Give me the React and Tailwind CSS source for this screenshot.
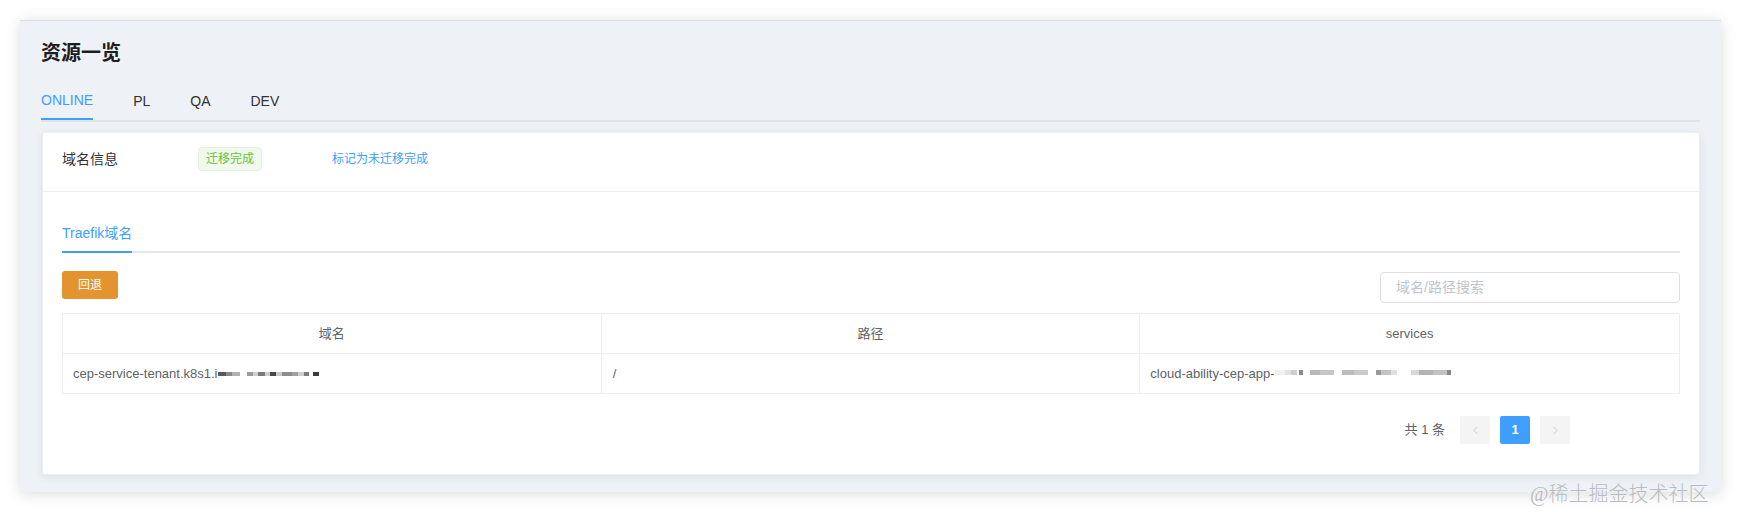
import React from "react";
import { ChevronLeft, ChevronRight } from "lucide-react";

const domainBlocks = [
  [8, "#5a5a5a"], [6, "#8a8a8a"], [8, "#b0b0b0"], [7, null], [6, "#9a9a9a"], [5, "#d0d0d0"], [7, "#7a7a7a"], [5, "#cfcfcf"], [6, "#474747"], [6, "#c8c8c8"], [10, "#8d8d8d"], [6, "#a0a0a0"], [6, "#cfcfcf"], [5, "#7c7c7c"], [4, null], [6, "#3a3a3a"],
];

const serviceBlocks = [
  [10, "#f0f0f0"], [6, "#e2e2e2"], [6, "#cfcfcf"], [2, null], [4, "#8a8a8a"], [7, null], [10, "#b9b9b9"], [14, "#c6c6c6"], [8, null], [12, "#bcbcbc"], [14, "#cacaca"], [8, null], [5, "#9a9a9a"], [10, "#c4c4c4"], [6, "#e0e0e0"], [14, null], [8, "#d8d8d8"], [14, "#b4b4b4"], [14, "#c2c2c2"], [4, "#888888"],
];

function Redacted({ blocks, h = "h-[5px]" }) {
  return (
    <span className="inline-flex items-center">
      {blocks.map(([w, c], i) => (
        <span
          key={i}
          className={`inline-block ${h}`}
          style={{ width: w, backgroundColor: c || "transparent" }}
        />
      ))}
    </span>
  );
}

export default function App() {
  return (
    <div className="relative w-[1741px] h-[512px] bg-white font-['Liberation_Sans','Noto_Sans_CJK_SC',sans-serif] overflow-hidden">
      <div className="pt-[20px] pl-[20px]">
        <div className="w-[1701px] h-[472px] bg-[#eef1f6] border-t border-[#dcdfe4] shadow-[0_2px_14px_rgba(0,0,0,0.14)] pl-[22px] pr-[21px] pt-[18px]">
          <div className="h-[28px] flex items-center text-[20px] font-bold text-[#1d1d1f]">
            <span className="-ml-[1px]">资源一览</span>
          </div>
          {/* env tabs */}
          <div className="mt-[16px] flex gap-[40px] border-b-2 border-[#dfe3ea] -ml-[1px]">
            <div className="h-[37px] flex items-center text-[14px] text-[#409eff] border-b-2 border-[#409eff] -mb-[2px]">ONLINE</div>
            <div className="h-[37px] flex items-center text-[14px] text-[#303133]">PL</div>
            <div className="h-[37px] flex items-center text-[14px] text-[#303133]">QA</div>
            <div className="h-[37px] flex items-center text-[14px] text-[#303133]">DEV</div>
          </div>
          {/* card */}
          <div className="mt-[10px] h-[343px] bg-white rounded-[3px] shadow-[0_2px_8px_rgba(0,0,0,0.08)] border border-[#ebeef5]">
            <div className="h-[59px] border-b border-[#ebeef5] flex items-start pt-[14px] px-[19px]">
              <div className="w-[136px] h-[24px] flex items-center text-[14px] text-[#303133]">域名信息</div>
              <div className="h-[24px] px-[7px] flex items-center rounded-[4px] bg-[#f0f9eb] border border-[#e1f3d8] text-[12px] text-[#67c23a]">迁移完成</div>
              <div className="ml-[70px] h-[24px] flex items-center text-[12px] text-[#409eff]">标记为未迁移完成</div>
            </div>
            <div className="px-[19px] pt-[23px]">
              <div className="flex border-b-2 border-[#e4e7ed]">
                <div className="h-[38px] flex items-center text-[14px] text-[#409eff] border-b-2 border-[#409eff] -mb-[2px]">Traefik域名</div>
              </div>
              <div className="mt-[18px] flex justify-between items-start">
                <button className="w-[56px] h-[28px] rounded-[3px] bg-[#e3942f] text-white text-[12px] flex items-center justify-center">回退</button>
                <div className="mt-[1px] w-[300px] h-[31px] rounded-[4px] border border-[#dcdfe6] flex items-center px-[15px] text-[14px] text-[#c0c4cc]">域名/路径搜索</div>
              </div>
              <div className="mt-[10px] border border-[#ebeef5] text-[13px] text-[#606266]">
                <div className="grid grid-cols-3 h-[40px] border-b border-[#ebeef5]">
                  <div className="flex items-center justify-center border-r border-[#ebeef5]">域名</div>
                  <div className="flex items-center justify-center border-r border-[#ebeef5]">路径</div>
                  <div className="flex items-center justify-center">services</div>
                </div>
                <div className="grid grid-cols-3 h-[39px]">
                  <div className="flex items-center px-[10px] border-r border-[#ebeef5]">
                    <span>cep-service-tenant.k8s1.i</span>
                    <Redacted blocks={domainBlocks} h="h-[4px]" />
                  </div>
                  <div className="flex items-center px-[11px] border-r border-[#ebeef5]">/</div>
                  <div className="flex items-center px-[10px]">
                    <span>cloud-ability-cep-app-</span>
                    <span className="-mt-[6px]">
                      <Redacted blocks={serviceBlocks} h="h-[5px]" />
                    </span>
                  </div>
                </div>
              </div>
              <div className="mt-[22px] flex justify-end items-center pr-[110px] text-[13px] text-[#606266]">
                <span className="mr-[15px]">共 1 条</span>
                <div className="w-[30px] h-[28px] rounded-[2px] bg-[#f4f4f5] flex items-center justify-center text-[#c0c4cc]">
                  <ChevronLeft size={13} strokeWidth={1.5} />
                </div>
                <div className="ml-[10px] w-[30px] h-[28px] rounded-[2px] bg-[#409eff] flex items-center justify-center text-white text-[13px] font-bold">1</div>
                <div className="ml-[10px] w-[30px] h-[28px] rounded-[2px] bg-[#f4f4f5] flex items-center justify-center text-[#c0c4cc]">
                  <ChevronRight size={13} strokeWidth={1.5} />
                </div>
              </div>
            </div>
          </div>
        </div>
      </div>
      <div className="absolute left-[1530px] top-[482px] text-[20px] leading-[24px] text-[#b9bcc2] font-['Liberation_Serif','Noto_Sans_CJK_SC',serif] font-light whitespace-nowrap">@稀土掘金技术社区</div>
    </div>
  );
}
